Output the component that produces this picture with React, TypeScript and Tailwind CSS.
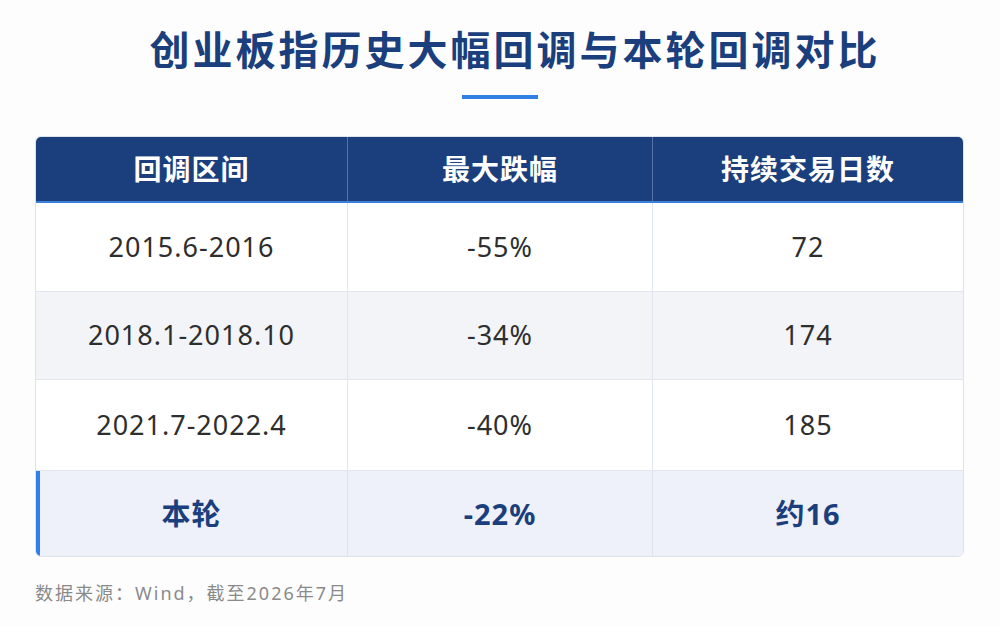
import React from 'react';

const rows = [
  { range: '2015.6-2016', drop: '-55%', days: '72', h: 'h-[89px]', bg: 'bg-white' },
  { range: '2018.1-2018.10', drop: '-34%', days: '174', h: 'h-[88px]', bg: 'bg-[#f3f4f8]' },
  { range: '2021.7-2022.4', drop: '-40%', days: '185', h: 'h-[91px]', bg: 'bg-white' },
];

const App: React.FC = () => {
  return (
    <div
      className="w-[1000px] h-[626px] bg-[#fdfdfe] overflow-hidden"
      style={{ fontFamily: '"Noto Sans", "Noto Sans CJK SC", sans-serif' }}
    >
      <div className="pt-[25px] flex flex-col items-center">
        <h1 className="text-[40px] leading-[50px] font-bold text-[#1b3f7d] tracking-[3px] pl-[30px]">
          创业板指历史大幅回调与本轮回调对比
        </h1>
        <div className="mt-[20px] w-[76px] h-[4px] bg-[#2f80e0]" />
      </div>

      <div className="mt-[37px] mx-[35px] w-[929px] rounded-[6px] overflow-hidden border border-[#dde3ec]">
        {/* header */}
        <div className="grid grid-cols-[312px_305px_1fr] h-[66px] bg-[#1b3f7d] border-b-2 border-[#3b7fd9]">
          {['回调区间', '最大跌幅', '持续交易日数'].map((t, i) => (
            <div
              key={t}
              className={`flex items-center justify-center text-white text-[28px] tracking-[1px] font-bold ${
                i < 2 ? 'border-r border-[#5873a3]' : ''
              }`}
            >
              {t}
            </div>
          ))}
        </div>

        {rows.map((r) => (
          <div
            key={r.range}
            className={`grid grid-cols-[312px_305px_1fr] ${r.h} ${r.bg} border-b border-[#e1e5ed] text-[27px] tracking-[1px] text-[#2e2e2e]`}
          >
            <div className="flex items-center justify-center border-r border-[#e1e5ed]">{r.range}</div>
            <div className="flex items-center justify-center border-r border-[#e1e5ed]">{r.drop}</div>
            <div className="flex items-center justify-center">{r.days}</div>
          </div>
        ))}

        <div className="relative grid grid-cols-[312px_305px_1fr] h-[85px] bg-[#eef1f9] text-[29px] tracking-[1px] font-bold text-[#1b3f7d]">
          <div className="absolute left-0 top-0 bottom-0 w-[4px] bg-[#2f80ed]" />
          <div className="flex items-center justify-center border-r border-[#dde2ec]">本轮</div>
          <div className="flex items-center justify-center border-r border-[#dde2ec]">-22%</div>
          <div className="flex items-center justify-center">约16</div>
        </div>
      </div>

      <div className="mt-[23px] ml-[35px] text-[18px] tracking-[2px] text-[#8a8a8a]">数据来源：Wind，截至2026年7月</div>
    </div>
  );
};

export default App;
